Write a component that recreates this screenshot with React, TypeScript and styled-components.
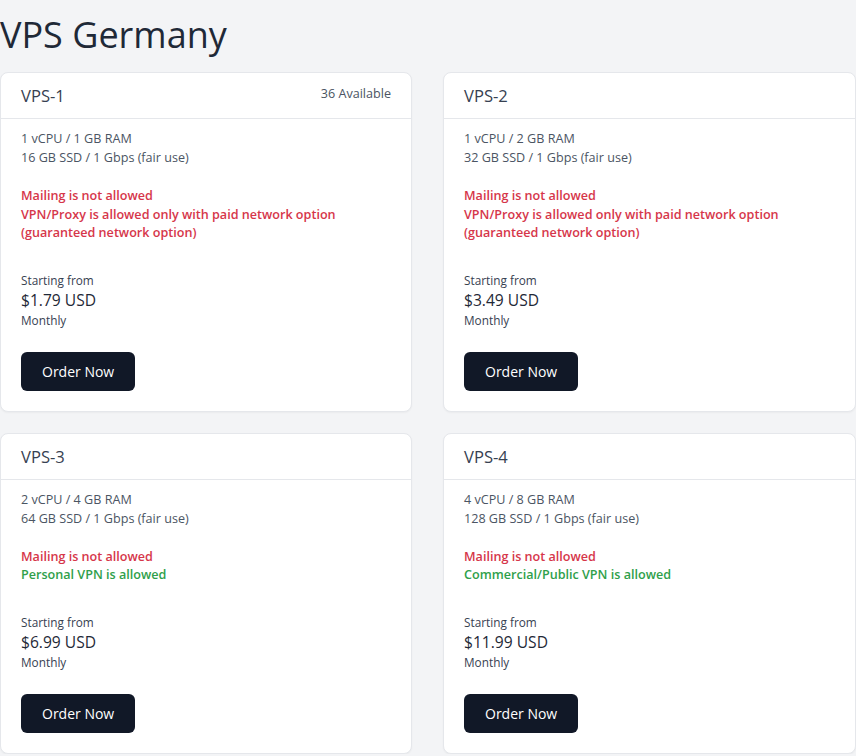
import styled, { createGlobalStyle } from "styled-components";

type Note = { text: string; ok?: boolean };

type Plan = {
  name: string;
  available?: string;
  specs: string[];
  notes: Note[];
  price: string;
};

const plans: Plan[] = [
  {
    name: "VPS-1",
    available: "36 Available",
    specs: ["1 vCPU / 1 GB RAM", "16 GB SSD / 1 Gbps (fair use)"],
    notes: [
      { text: "Mailing is not allowed" },
      { text: "VPN/Proxy is allowed only with paid network option (guaranteed network option)" },
    ],
    price: "$1.79 USD",
  },
  {
    name: "VPS-2",
    specs: ["1 vCPU / 2 GB RAM", "32 GB SSD / 1 Gbps (fair use)"],
    notes: [
      { text: "Mailing is not allowed" },
      { text: "VPN/Proxy is allowed only with paid network option (guaranteed network option)" },
    ],
    price: "$3.49 USD",
  },
  {
    name: "VPS-3",
    specs: ["2 vCPU / 4 GB RAM", "64 GB SSD / 1 Gbps (fair use)"],
    notes: [
      { text: "Mailing is not allowed" },
      { text: "Personal VPN is allowed", ok: true },
    ],
    price: "$6.99 USD",
  },
  {
    name: "VPS-4",
    specs: ["4 vCPU / 8 GB RAM", "128 GB SSD / 1 Gbps (fair use)"],
    notes: [
      { text: "Mailing is not allowed" },
      { text: "Commercial/Public VPN is allowed", ok: true },
    ],
    price: "$11.99 USD",
  },
];

const App = () => {
  return (
    <StyledPage>
      <GlobalStyle />
      <StyledTitle>VPS Germany</StyledTitle>
      <StyledGrid>
        {plans.map((plan) => (
          <StyledCard key={plan.name}>
            <StyledCardHeader>
              <StyledPlanName>{plan.name}</StyledPlanName>
              {plan.available && <StyledAvailable>{plan.available}</StyledAvailable>}
            </StyledCardHeader>
            <StyledCardBody>
              <StyledSpecs>
                {plan.specs.map((s) => (
                  <div key={s}>{s}</div>
                ))}
              </StyledSpecs>
              <StyledNotes>
                {plan.notes.map((n) => (
                  <StyledNote key={n.text} $ok={n.ok}>
                    {n.text}
                  </StyledNote>
                ))}
              </StyledNotes>
              <StyledSmall>Starting from</StyledSmall>
              <StyledPrice>{plan.price}</StyledPrice>
              <StyledSmall>Monthly</StyledSmall>
              <StyledOrderButton type="button">Order Now</StyledOrderButton>
            </StyledCardBody>
          </StyledCard>
        ))}
      </StyledGrid>
    </StyledPage>
  );
};

const GlobalStyle = createGlobalStyle`
  body {
    margin: 0;
    background: #F3F4F6;
    font-family: "Open Sans", "Noto Sans", sans-serif;
  }
`;

const StyledPage = styled.div`
  width: 856px;
  padding-top: 15px;
`;

const StyledTitle = styled.h1`
  margin: 0 0 17px 0;
  font-size: 36px;
  line-height: 40px;
  font-weight: 400;
  color: #1F2937;
`;

const StyledGrid = styled.div`
  display: grid;
  grid-template-columns: 412px 413px;
  column-gap: 31px;
  row-gap: 21px;
`;

const StyledCard = styled.div`
  background: #FFF;
  border: 1px solid #E5E7EB;
  border-radius: 8px;
  box-shadow: 0 1px 2px rgba(0, 0, 0, 0.04);
  box-sizing: border-box;
`;

const StyledCardHeader = styled.div`
  height: 45px;
  padding: 0 20px;
  border-bottom: 1px solid #E5E7EB;
  display: flex;
  justify-content: space-between;
  align-items: center;
`;

const StyledPlanName = styled.span`
  font-size: 16.6px;
  color: #374151;
`;

const StyledAvailable = styled.span`
  font-size: 12.6px;
  color: #4B5563;
  margin-top: -4px;
`;

const StyledCardBody = styled.div`
  padding: 10px 20px 20px 20px;
  display: flex;
  flex-direction: column;
  align-items: flex-start;
`;

const StyledSpecs = styled.div`
  font-size: 12.6px;
  line-height: 19px;
  color: #4B5563;
  margin-bottom: 20px;
`;

const StyledNotes = styled.div`
  font-size: 12.6px;
  line-height: 18.5px;
  font-weight: 600;
  margin-bottom: 29px;
  max-width: 330px;
`;

const StyledNote = styled.div<{ $ok?: boolean }>`
  color: ${(p) => (p.$ok ? "#2FA04A" : "#D6364A")};
`;

const StyledSmall = styled.div`
  font-size: 11.8px;
  line-height: 16px;
  color: #374151;
`;

const StyledPrice = styled.div`
  font-size: 15.6px;
  line-height: 24px;
  color: #1F2937;
`;

const StyledOrderButton = styled.button`
  margin-top: 24px;
  height: 39px;
  padding: 0 21px;
  border: none;
  border-radius: 6px;
  background: #111827;
  color: #FFF;
  font-family: "Open Sans", "Noto Sans", sans-serif;
  font-size: 14px;
  font-weight: 500;
  cursor: pointer;
`;

export default App;
